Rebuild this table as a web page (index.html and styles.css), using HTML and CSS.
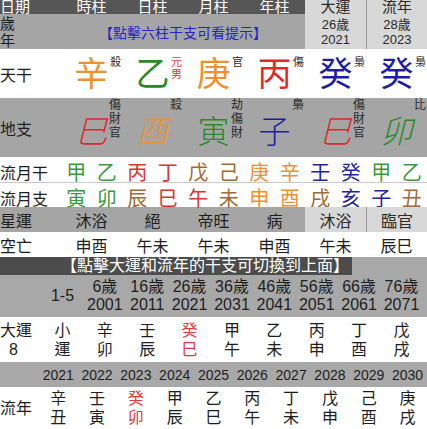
FILE: index.html
```html
<!DOCTYPE html>
<html lang="zh-Hant">
<head>
<meta charset="utf-8">
<title>八字</title>
<link rel="stylesheet" href="styles.css">
</head>
<body>
<div class="chart">
  <div class="row hdr">
    <div class="c lab">日期</div>
    <div class="c">時柱</div>
    <div class="c">日柱</div>
    <div class="c">月柱</div>
    <div class="c">年柱</div>
    <div class="c lt">大運</div>
    <div class="c lt sep">流年</div>
  </div>
  <div class="row age">
    <div class="c lab two">歲<br>年</div>
    <div class="hint">【點擊六柱干支可看提示】</div>
    <div class="c lt small">26歲<br>2021</div>
    <div class="c lt small sep">28歲<br>2023</div>
  </div>
  <div class="row tg">
    <div class="c lab">天干</div>
    <div class="c p"><span class="big metal">辛</span><span class="st">殺</span></div>
    <div class="c p"><span class="big wood">乙</span><span class="st red">元<br>男</span></div>
    <div class="c p"><span class="big metal">庚</span><span class="st">官</span></div>
    <div class="c p"><span class="big fire">丙</span><span class="st">傷</span></div>
    <div class="c p"><span class="big water">癸</span><span class="st">梟</span></div>
    <div class="c p"><span class="big water">癸</span><span class="st">梟</span></div>
  </div>
  <div class="row dz">
    <div class="c lab">地支</div>
    <div class="c p"><span class="big fire it">巳</span><span class="st">傷<br>財<br>官</span></div>
    <div class="c p"><span class="big metal it">酉</span><span class="st">殺</span></div>
    <div class="c p"><span class="big wood">寅</span><span class="st">劫<br>傷<br>財</span></div>
    <div class="c p"><span class="big water">子</span><span class="st">梟</span></div>
    <div class="c p"><span class="big fire it">巳</span><span class="st">傷<br>財<br>官</span></div>
    <div class="c p"><span class="big wood it">卯</span><span class="st">比</span></div>
  </div>
  <div class="mrow m1">
    <div class="mlab">流月干</div>
    <span class="wood2">甲</span><span class="wood2">乙</span><span class="fire2">丙</span><span class="fire2">丁</span><span class="earth2">戊</span><span class="earth2">己</span><span class="metal2">庚</span><span class="metal2">辛</span><span class="water2">壬</span><span class="water2">癸</span><span class="wood2">甲</span><span class="wood2">乙</span>
  </div>
  <div class="mrow m2">
    <div class="mlab">流月支</div>
    <span class="wood2">寅</span><span class="wood2">卯</span><span class="earth2">辰</span><span class="fire2">巳</span><span class="fire2">午</span><span class="earth2">未</span><span class="metal2">申</span><span class="metal2">酉</span><span class="earth2">戌</span><span class="water2">亥</span><span class="water2">子</span><span class="earth2">丑</span>
  </div>
  <div class="row xy">
    <div class="c lab">星運</div>
    <div class="c">沐浴</div>
    <div class="c">絕</div>
    <div class="c">帝旺</div>
    <div class="c">病</div>
    <div class="c lt">沐浴</div>
    <div class="c lt sep">臨官</div>
  </div>
  <div class="row kw">
    <div class="c lab">空亡</div>
    <div class="c">申酉</div>
    <div class="c">午未</div>
    <div class="c">午未</div>
    <div class="c">申酉</div>
    <div class="c">午未</div>
    <div class="c">辰巳</div>
  </div>
  <div class="bar"><span class="bartext">【點擊大運和流年的干支可切換到上面】</span></div>
  <div class="dy dyhead">
    <div></div>
    <div class="one">1-5</div>
    <div>6歲<br>2001</div>
    <div>16歲<br>2011</div>
    <div>26歲<br>2021</div>
    <div>36歲<br>2031</div>
    <div>46歲<br>2041</div>
    <div>56歲<br>2051</div>
    <div>66歲<br>2061</div>
    <div>76歲<br>2071</div>
  </div>
  <div class="dy dyrow">
    <div class="blab">大運<br><span class="n8">8</span></div>
    <div>小<br>運</div>
    <div>辛<br>卯</div>
    <div>壬<br>辰</div>
    <div class="cur">癸<br>巳</div>
    <div>甲<br>午</div>
    <div>乙<br>未</div>
    <div>丙<br>申</div>
    <div>丁<br>酉</div>
    <div>戊<br>戌</div>
  </div>
  <div class="ln lnhead">
    <div></div>
    <div>2021</div><div>2022</div><div>2023</div><div>2024</div><div>2025</div>
    <div>2026</div><div>2027</div><div>2028</div><div>2029</div><div>2030</div>
  </div>
  <div class="ln lnrow">
    <div class="blab mid">流年</div>
    <div>辛<br>丑</div>
    <div>壬<br>寅</div>
    <div class="cur">癸<br>卯</div>
    <div>甲<br>辰</div>
    <div>乙<br>巳</div>
    <div>丙<br>午</div>
    <div>丁<br>未</div>
    <div>戊<br>申</div>
    <div>己<br>酉</div>
    <div>庚<br>戌</div>
  </div>
</div>
</body>
</html>
```
FILE: styles.css
```css
html, body {
  margin: 0;
  padding: 0;
  background: #ffffff;
}
body {
  width: 427px;
  height: 429px;
  overflow: hidden;
  font-family: "Liberation Sans", "Noto Sans CJK TC", sans-serif;
  color: #1e1e1e;
}
.chart {
  width: 427px;
}
.row {
  display: grid;
  grid-template-columns: repeat(7, 61px);
}
.c {
  display: flex;
  align-items: center;
  justify-content: center;
  font-size: 16px;
  white-space: nowrap;
}
.c.lab {
  justify-content: flex-start;
}
.lt {
  background: #d8d8d8;
  color: #2a2a2a;
}
.sep {
  border-left: 1px solid #9c9c9c;
}

/* header */
.hdr {
  height: 14px;
  background: #565656;
  color: #ffffff;
}
.hdr .c {
  font-size: 15px;
  line-height: 14px;
}

/* age row */
.age {
  height: 35px;
  background: #a5a5a5;
}
.age .two {
  font-size: 15px;
  line-height: 17px;
  text-align: left;
}
.hint {
  grid-column: span 4;
  display: flex;
  align-items: center;
  justify-content: center;
  font-size: 14px;
  color: #2424c6;
}
.small {
  font-size: 13px;
  line-height: 15px;
  text-align: center;
}

/* pillars */
.tg {
  height: 49px;
  background: #ffffff;
}
.dz {
  height: 59px;
  background: #a5a5a5;
}
.p {
  position: relative;
}
.big {
  font-size: 34px;
  line-height: 40px;
}
.dz .big {
  font-size: 32px;
  font-weight: 300;
  padding-top: 8px;
}
.it {
  font-style: italic;
}
.st {
  position: absolute;
  right: 1px;
  top: 7px;
  font-size: 11px;
  line-height: 12px;
  color: #2a2a2a;
}
.dz .st {
  top: 0px;
  font-size: 12px;
  line-height: 14px;
}
.st.red { color: #e03a3a; }

.wood { color: #2a8a2a; }
.fire { color: #e02a2a; }
.metal { color: #f0902c; }
.water { color: #1c1ca6; }

/* monthly rows */
.mrow {
  display: grid;
  grid-template-columns: 61px repeat(12, 30.5px);
  align-items: center;
  background: #ffffff;
  font-size: 20px;
  text-align: center;
}
.m1 {
  height: 25px;
  border-bottom: 1px solid #c9c9c9;
}
.m2 {
  height: 24px;
}
.mlab {
  font-size: 16px;
  text-align: left;
  white-space: nowrap;
}
.wood2 { color: #3b9a3b; }
.fire2 { color: #d83434; }
.earth2 { color: #a36a30; }
.metal2 { color: #ee902e; }
.water2 { color: #24249e; }

/* star / void rows */
.xy {
  height: 25px;
  background: #a5a5a5;
}
.kw {
  height: 25px;
  background: #ffffff;
}

/* hint bar */
.bar {
  height: 18px;
  background: #a8a8a8;
  display: flex;
}
.bartext {
  width: 291px;
  padding-left: 61px;
  background: #4c4c4c;
  color: #ffffff;
  font-size: 16px;
  line-height: 18px;
  white-space: nowrap;
}

/* luck pillars */
.dy {
  display: grid;
  grid-template-columns: 41.3px repeat(9, 42.375px);
  align-items: center;
  text-align: center;
  font-size: 16px;
  white-space: nowrap;
}
.dyhead {
  height: 42px;
  background: #a8a8a8;
  line-height: 18px;
}
.dyrow {
  height: 45px;
  background: #ffffff;
  line-height: 19px;
}
.blab {
  text-align: left;
}
.n8 {
  padding-left: 9px;
}
.cur {
  color: #de3a3a;
}

/* annual */
.ln {
  display: grid;
  grid-template-columns: repeat(11, 1fr);
  align-items: center;
  text-align: center;
  white-space: nowrap;
}
.lnhead {
  height: 25px;
  background: #a8a8a8;
  font-size: 14px;
}
.lnrow {
  height: 42px;
  background: #ffffff;
  font-size: 16px;
  line-height: 19px;
}
```
